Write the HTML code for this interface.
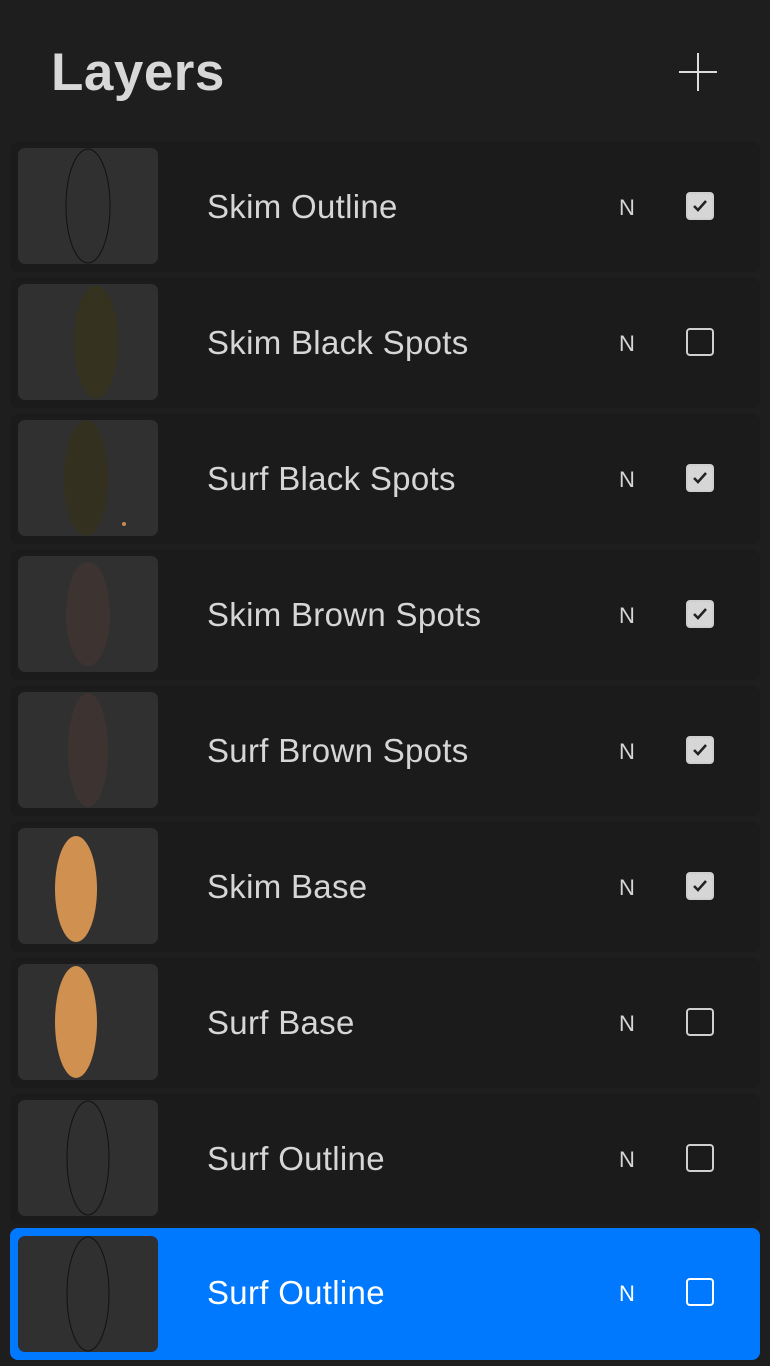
<!DOCTYPE html>
<html><head><style>
body{margin:0;width:770px;height:1366px;background:#1e1e1e;font-family:"Liberation Sans",sans-serif;position:relative;overflow:hidden}
h1{position:absolute;left:51px;top:42px;margin:0;font-size:53px;font-weight:bold;color:#d8d8d8;letter-spacing:0.5px}
.plus{position:absolute;left:679px;top:53px;width:38px;height:38px}
.plus:before{content:"";position:absolute;left:18px;top:0;width:2px;height:38px;background:#ddd}
.plus:after{content:"";position:absolute;left:0;top:18px;width:38px;height:2px;background:#ddd}
.row{position:absolute;left:10px;width:750px;height:130px;background:#1b1b1b;border-radius:8px}
.row.sel{background:#0079fe}
.th{position:absolute;left:8px;top:6px;width:140px;height:116px;background:#303030;border-radius:7px;overflow:hidden}
.th svg{position:absolute;left:0;top:0}
.name{position:absolute;left:197px;top:46px;font-size:33px;color:#d6d6d6;letter-spacing:0.3px}
.sel .name,.sel .n{color:#fff}
.n{position:absolute;left:609px;top:53px;font-size:22px;color:#d6d6d6}
.cb{position:absolute;left:676px;top:50px;width:24px;height:24px;border:2px solid #d0d0d0;border-radius:4px}
.cb.on{background:#d6d6d6}
.sel .cb{border-color:#fff}
.cb.on svg{position:absolute;left:3px;top:3px}
</style></head><body>
<h1>Layers</h1>
<div class="plus"></div>

<div class="row" style="top:142px"><div class="th"><svg width="140" height="116"><ellipse cx="70" cy="58" rx="22" ry="57" fill="none" stroke="#111" stroke-width="1"/></svg></div><div class="name">Skim Outline</div><div class="n">N</div><div class="cb on"><svg width="18" height="18"><path d="M3 9l4 4 8-9" fill="none" stroke="#222" stroke-width="2.5"/></svg></div></div>

<div class="row" style="top:278px"><div class="th"><svg width="140" height="116"><ellipse cx="78" cy="58" rx="22" ry="57" fill="#35321f"/></svg></div><div class="name">Skim Black Spots</div><div class="n">N</div><div class="cb"></div></div>

<div class="row" style="top:414px"><div class="th"><svg width="140" height="116"><ellipse cx="68" cy="58" rx="22" ry="58" fill="#34301f"/><circle cx="106" cy="104" r="2" fill="#c88a55"/></svg></div><div class="name">Surf Black Spots</div><div class="n">N</div><div class="cb on"><svg width="18" height="18"><path d="M3 9l4 4 8-9" fill="none" stroke="#222" stroke-width="2.5"/></svg></div></div>

<div class="row" style="top:550px"><div class="th"><svg width="140" height="116"><ellipse cx="70" cy="58" rx="22" ry="52" fill="#3d3431"/></svg></div><div class="name">Skim Brown Spots</div><div class="n">N</div><div class="cb on"><svg width="18" height="18"><path d="M3 9l4 4 8-9" fill="none" stroke="#222" stroke-width="2.5"/></svg></div></div>

<div class="row" style="top:686px"><div class="th"><svg width="140" height="116"><ellipse cx="70" cy="58" rx="20" ry="57" fill="#3d3431"/></svg></div><div class="name">Surf Brown Spots</div><div class="n">N</div><div class="cb on"><svg width="18" height="18"><path d="M3 9l4 4 8-9" fill="none" stroke="#222" stroke-width="2.5"/></svg></div></div>

<div class="row" style="top:822px"><div class="th"><svg width="140" height="116"><ellipse cx="58" cy="61" rx="21" ry="53" fill="#d09050"/></svg></div><div class="name">Skim Base</div><div class="n">N</div><div class="cb on"><svg width="18" height="18"><path d="M3 9l4 4 8-9" fill="none" stroke="#222" stroke-width="2.5"/></svg></div></div>

<div class="row" style="top:958px"><div class="th"><svg width="140" height="116"><ellipse cx="58" cy="58" rx="21" ry="56" fill="#d09050"/></svg></div><div class="name">Surf Base</div><div class="n">N</div><div class="cb"></div></div>

<div class="row" style="top:1094px"><div class="th"><svg width="140" height="116"><ellipse cx="70" cy="58" rx="21" ry="57" fill="none" stroke="#111" stroke-width="1"/></svg></div><div class="name">Surf Outline</div><div class="n">N</div><div class="cb"></div></div>

<div class="row sel" style="top:1228px;height:132px"><div class="th" style="top:8px"><svg width="140" height="116"><ellipse cx="70" cy="58" rx="21" ry="57" fill="none" stroke="#111" stroke-width="1"/></svg></div><div class="name">Surf Outline</div><div class="n">N</div><div class="cb"></div></div>
</body></html>
